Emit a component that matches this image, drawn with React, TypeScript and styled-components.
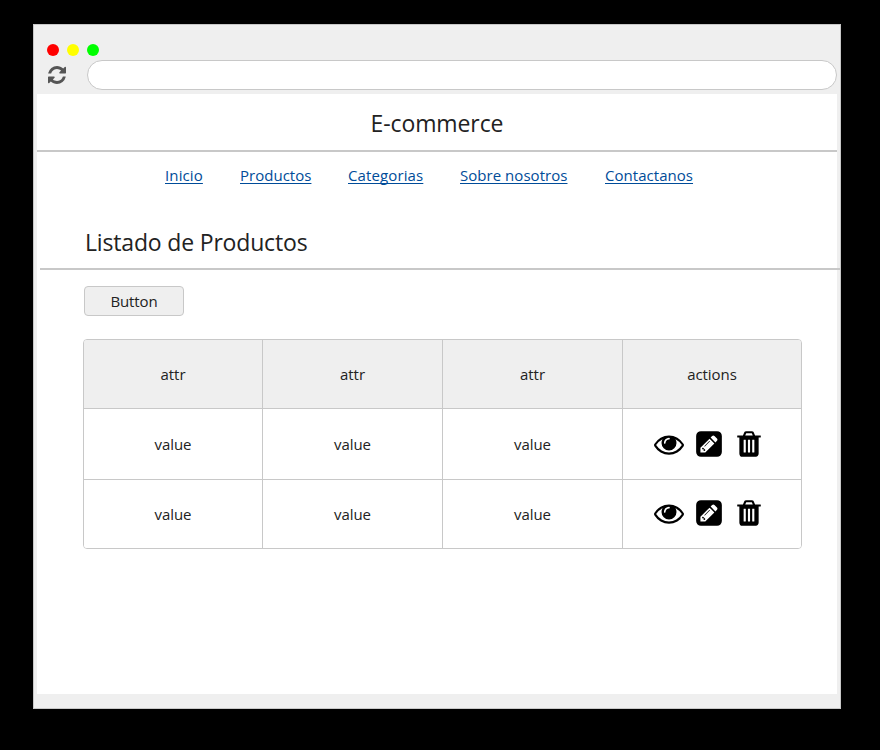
import React from "react";
import styled, { createGlobalStyle } from "styled-components";

const GlobalStyle = createGlobalStyle`
  * { box-sizing: border-box; }
  body { margin: 0; background: #000; font-family: "Open Sans", "Noto Sans", sans-serif; font-weight: 400; color: #222; }
`;
const Desktop = styled.div`
  width: 880px; height: 750px; padding: 24px 0 0 33px; background: #000; overflow: hidden;
`;
const Window = styled.main`
  width: 808px; height: 685px; background: #efefef; border: 1px solid #c8c8c8;
  padding: 19px 3px 0; display: flex; flex-direction: column;
`;
const Lights = styled.div`
  display: flex; gap: 8px; padding-left: 10px; height: 16px;
`;
const Light = styled.span<{ $color: string }>`
  width: 12px; height: 12px; border-radius: 50%; background: ${(p) => p.$color};
`;
const AddressRow = styled.div`
  display: flex; height: 34px; padding-left: 11px;
`;
const AddressBar = styled.div`
  width: 750px; height: 30px; margin-left: 21px; border: 1px solid #c8c8c8; border-radius: 15px; background: #fff; flex: none;
`;
const Page = styled.div`
  width: 800px; height: 600px; background: #fff;
`;
const Header = styled.header`
  height: 58px; border-bottom: 2px solid #c8c8c8; display: flex; justify-content: center; padding-top: 12px;
`;
const Title = styled.h1<{ $w: number; $spacing: number }>`
  display: block; margin: 0; width: ${(p) => p.$w}px; font-size: 23px; font-weight: 400;
  letter-spacing: ${(p) => p.$spacing}px; line-height: 34px; white-space: nowrap;
`;
const Nav = styled.nav`
  display: flex; gap: 37px; padding: 6px 0 0 128px; height: 68px;
`;
const Link = styled.a<{ $w: number; $spacing: number }>`
  display: block; width: ${(p) => p.$w}px; font-size: 15px; line-height: 34px; height: 34px; white-space: nowrap;
  letter-spacing: ${(p) => p.$spacing}px; color: #004c99; text-decoration: underline;
  text-decoration-thickness: 1px; text-underline-offset: 2px; text-decoration-skip-ink: none;
`;
const SectionHead = styled.div`
  width: 800px; height: 50px; margin-left: 3px; padding: 5px 0 0 45px; border-bottom: 2px solid #c8c8c8;
`;
const Button = styled.button`
  display: flex; justify-content: center; align-items: center; width: 100px; height: 30px; margin: 16px 0 23px 47px;
  padding: 0; border: 1px solid #c8c8c8; border-radius: 4px; background: #efefef; color: #222;
  font-family: inherit; font-size: 15px; letter-spacing: -0.1px;
`;
const Table = styled.div`
  width: 719px; height: 210px; margin-left: 46px; border: 1px solid #c8c8c8; border-radius: 4px; overflow: hidden;
  display: grid; grid-template-columns: 179px 180px 180px 178px; grid-template-rows: 69px 71px 68px;
`;
const Cell = styled.div<{ $head?: boolean; $last?: boolean; $bottom?: boolean }>`
  display: flex; align-items: center; justify-content: center; font-size: 15px; letter-spacing: -0.05px;
  background: ${(p) => (p.$head ? "#efefef" : "#fff")};
  border-right: ${(p) => (p.$last ? 0 : 1)}px solid #c8c8c8;
  border-bottom: ${(p) => (p.$bottom ? 0 : 1)}px solid #c8c8c8;
`;
const Actions = styled(Cell)`
  justify-content: flex-start; gap: 12px; padding-left: 31px;
  padding-bottom: ${(p) => (p.$bottom ? 2 : 0)}px;
`;
const Icon = styled.svg`
  display: block; flex: none;
`;
const TrashIcon = styled(Icon)`
  margin-left: 3px;
`;

const REFRESH =
  "M1511 1056q0 5-1 7-64 268-268 434.500t-478 166.500q-146 0-282.500-55t-243.500-157l-129 129q-19 19-45 19t-45-19-19-45v-448q0-26 19-45t45-19h448q26 0 45 19t19 45-19 45l-137 137q71 66 161 102t187 36q134 0 250-65t186-179q11-17 53-117 8-23 30-23h192q13 0 22.500 9.500t9.500 22.500zm25-800v448q0 26-19 45t-45 19h-448q-26 0-45-19t-19-45 19-45l138-138q-148-137-349-137-134 0-250 65t-186 179q-11 17-53 117-8 23-30 23h-199q-13 0-22.500-9.500t-9.500-22.500v-7q65-268 270-434.500t480-166.500q146 0 284 55.500t245 156.500l130-129q19-19 45-19t45 19 19 45z";
const EYE =
  "M1664 960q-152-236-381-353 61 104 61 225 0 185-131.500 316.500t-316.500 131.500-316.500-131.500-131.500-316.500q0-121 61-225-229 117-381 353 133 205 333.500 326.500t434.500 121.500 434.500-121.500 333.500-326.500zm-720-384q0-20-14-34t-34-14q-125 0-214.500 89.500t-89.500 214.500q0 20 14 34t34 14 34-14 14-34q0-86 61-147t147-61q20 0 34-14t14-34zm848 384q0 34-20 69-140 230-376.500 368.500t-499.500 138.500-499.500-139-376.500-368q-20-35-20-69t20-69q140-229 376.500-368t499.500-139 499.500 139 376.500 368q20 35 20 69z";
const EDIT =
  "M404 1108l152 152-52 52h-56v-96h-96v-56zm414-390q14 13-3 30l-291 291q-17 17-30 3-14-13 3-30l291-291q17-17 30-3zm-274 690l544-544-288-288-544 544v288h288zm608-608l92-92q28-28 28-68t-28-68l-152-152q-28-28-68-28t-68 28l-92 92zm384-384v960q0 119-84.500 203.500t-203.500 84.500h-960q-119 0-203.500-84.500t-84.500-203.500v-960q0-119 84.500-203.500t203.500-84.500h960q119 0 203.500 84.500t84.500 203.500z";
const TRASH =
  "M704 1376v-704q0-14-9-23t-23-9h-64q-14 0-23 9t-9 23v704q0 14 9 23t23 9h64q14 0 23-9t9-23zm256 0v-704q0-14-9-23t-23-9h-64q-14 0-23 9t-9 23v704q0 14 9 23t23 9h64q14 0 23-9t9-23zm256 0v-704q0-14-9-23t-23-9h-64q-14 0-23 9t-9 23v704q0 14 9 23t23 9h64q14 0 23-9t9-23zm-544-992h448l-48-117q-7-9-17-11h-317q-10 2-17 11zm928 32v64q0 14-9 23t-23 9h-96v948q0 83-47 143.500t-113 60.500h-832q-66 0-113-58.500t-47-141.500v-952h-96q-14 0-23-9t-9-23v-64q0-14 9-23t23-9h309l70-167q15-37 54-63t79-26h320q40 0 79 26t54 63l70 167h309q14 0 23 9t9 23z";

const links = [
  { label: "Inicio", w: 38, s: 0.12 },
  { label: "Productos", w: 71, s: 0.02 },
  { label: "Categorias", w: 75, s: 0.12 },
  { label: "Sobre nosotros", w: 108, s: 0.04 },
  { label: "Contactanos", w: 88, s: 0.04 },
];

export default function App() {
  return (
    <Desktop>
      <GlobalStyle />
      <Window>
        <Lights>
          <Light $color="#f00" />
          <Light $color="#ff0" />
          <Light $color="#0f0" />
        </Lights>
        <AddressRow>
          <Icon width="18" height="30" viewBox="0 -384 1536 2560" fill="#555">
            <path d={REFRESH} />
          </Icon>
          <AddressBar />
        </AddressRow>
        <Page>
          <Header>
            <Title $w={133} $spacing={-0.1}>E-commerce</Title>
          </Header>
          <Nav>
            {links.map((l) => (
              <Link key={l.label} $w={l.w} $spacing={l.s}>{l.label}</Link>
            ))}
          </Nav>
          <SectionHead>
            <Title as="h2" $w={223} $spacing={-0.17}>Listado de Productos</Title>
          </SectionHead>
          <Button>Button</Button>
          <Table>
            {["attr", "attr", "attr", "actions"].map((t, i) => (
              <Cell key={i} $head $last={i === 3}>{t}</Cell>
            ))}
            {[0, 1].map((r) => (
              <React.Fragment key={r}>
                {[0, 1, 2].map((c) => (
                  <Cell key={c} $bottom={r === 1}>value</Cell>
                ))}
                <Actions $last $bottom={r === 1}>
                  <Icon width="30" height="30" viewBox="0 0 1792 1792"><path d={EYE} /></Icon>
                  <Icon width="26" height="30" viewBox="0 0 1536 1792"><path d={EDIT} /></Icon>
                  <TrashIcon width="24" height="30" viewBox="192 0 1408 1792"><path d={TRASH} /></TrashIcon>
                </Actions>
              </React.Fragment>
            ))}
          </Table>
        </Page>
      </Window>
    </Desktop>
  );
}
